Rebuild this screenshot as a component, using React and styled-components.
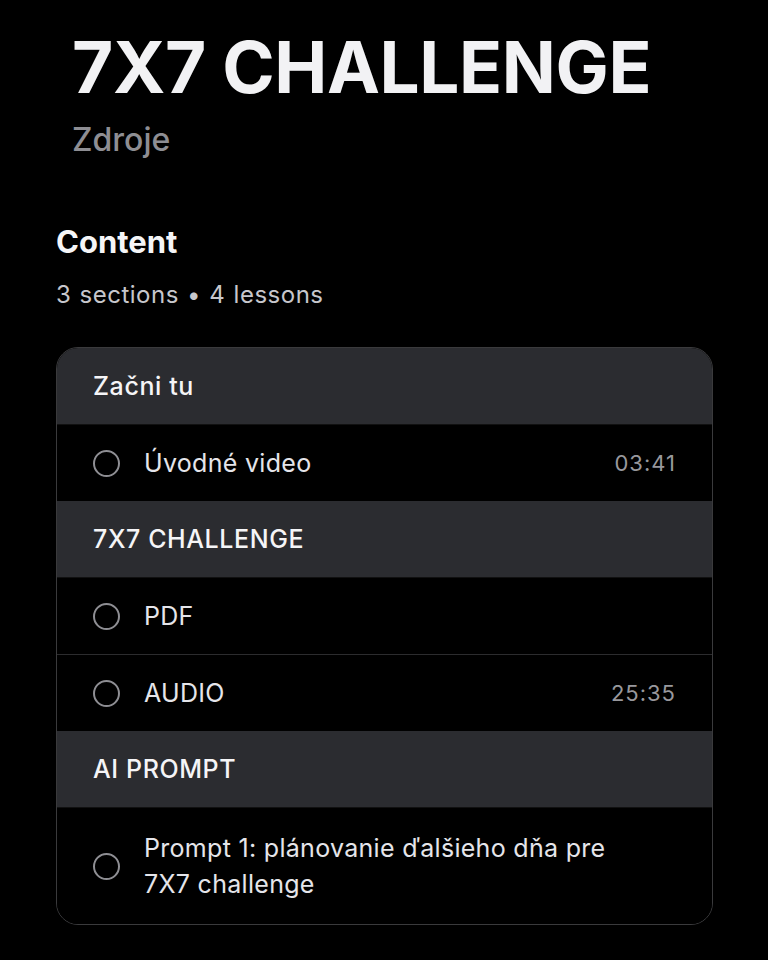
import styled, { createGlobalStyle } from 'styled-components';

const GlobalStyle = createGlobalStyle`
  html, body {
    margin: 0;
    padding: 0;
    background: #000;
  }
  body {
    font-family: Inter, "Noto Sans", "Liberation Sans", sans-serif;
    color: #f2f2f7;
  }
`

const Page = styled.div`
  width: 768px;
  height: 960px;
  background: #000;
  overflow: hidden;
  box-sizing: border-box;
  padding: 25px 56px 0 56px;
`

const Hero = styled.div`
  padding-left: 16px;
`

const Title = styled.h1`
  margin: 0;
  font-size: 71px;
  font-weight: 700;
  line-height: 84px;
  letter-spacing: -0.4px;
  color: #f2f2f4;
`

const Subtitle = styled.div`
  margin-top: 11px;
  font-size: 32px;
  line-height: 40px;
  font-weight: 500;
  color: #8e8e93;
`

const SectionTitle = styled.h2`
  margin: 62px 0 0 0;
  font-size: 31px;
  line-height: 40px;
  font-weight: 700;
  color: #f5f5f7;
`

const Meta = styled.div`
  margin-top: 18px;
  font-size: 24px;
  line-height: 30px;
  letter-spacing: 0.5px;
  word-spacing: 1px;
  color: #c7c7cc;
`

const Card = styled.div`
  margin-top: 37px;
  width: 657px;
  border: 1.5px solid #3a3a3c;
  border-radius: 22px;
  overflow: hidden;
  box-sizing: border-box;
`

const GroupHeader = styled.div`
  height: 76px;
  display: flex;
  align-items: center;
  padding: 0 36px;
  background: #2b2c30;
  font-size: 25px;
  font-weight: 500;
  letter-spacing: 0.6px;
  color: #f5f5f7;
`

const Lesson = styled.div`
  display: flex;
  align-items: center;
  gap: 24px;
  min-height: 77px;
  padding: ${props => (props.$tall ? '22px' : '0')} 36px;
  box-sizing: border-box;
  background: #000;
  border-top: 1px solid ${props => (props.$divider ? '#2c2c2e' : '#111')};
`

const Circle = styled.span`
  flex: none;
  width: 23px;
  height: 23px;
  border: 2px solid #8e8e93;
  border-radius: 50%;
`

const LessonName = styled.span`
  flex: 1;
  max-width: 480px;
  font-size: 25px;
  line-height: 36px;
  letter-spacing: 0.3px;
  color: #e5e5ea;
`

const Duration = styled.span`
  margin-left: auto;
  font-size: 22px;
  color: #98989d;
  letter-spacing: 1px;
`

const groups = [
  {
    title: 'Začni tu',
    lessons: [{ name: 'Úvodné video', time: '03:41' }],
  },
  {
    title: '7X7 CHALLENGE',
    lessons: [
      { name: 'PDF' },
      { name: 'AUDIO', time: '25:35' },
    ],
  },
  {
    title: 'AI PROMPT',
    lessons: [{ name: 'Prompt 1: plánovanie ďalšieho dňa pre 7X7 challenge', tall: true }],
  },
]

function App() {
  return (
    <>
      <GlobalStyle />
      <Page>
        <Hero>
          <Title>7X7 CHALLENGE</Title>
          <Subtitle>Zdroje</Subtitle>
        </Hero>
        <SectionTitle>Content</SectionTitle>
        <Meta>3 sections • 4 lessons</Meta>
        <Card>
          {groups.map(group => (
            <div key={group.title}>
              <GroupHeader>{group.title}</GroupHeader>
              {group.lessons.map((lesson, i) => (
                <Lesson key={lesson.name} $divider={i > 0} $tall={lesson.tall}>
                  <Circle />
                  <LessonName>{lesson.name}</LessonName>
                  {lesson.time && <Duration>{lesson.time}</Duration>}
                </Lesson>
              ))}
            </div>
          ))}
        </Card>
      </Page>
    </>
  )
}

export default App;
